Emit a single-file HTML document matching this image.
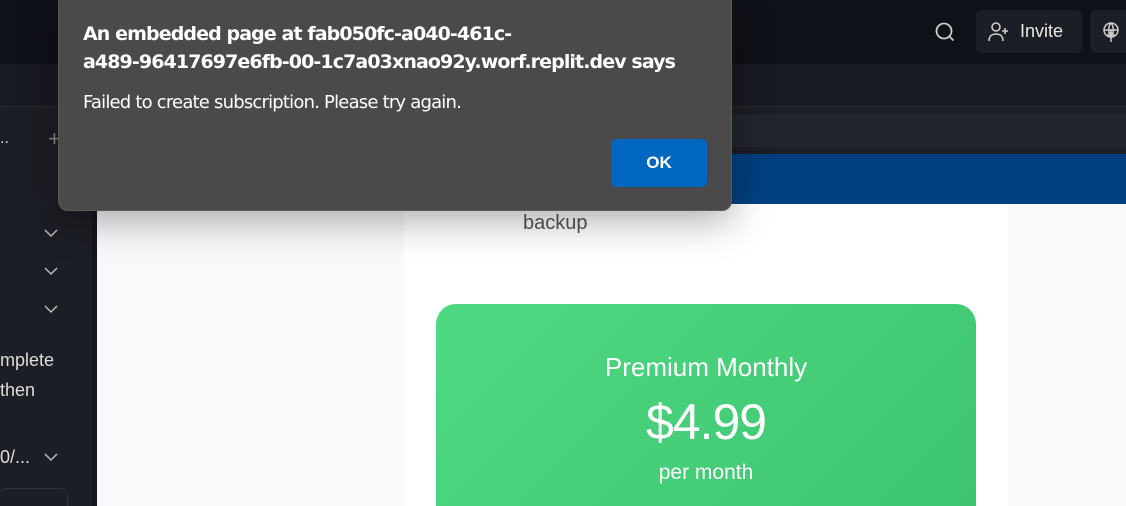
<!DOCTYPE html>
<html><head><style>
*{margin:0;padding:0;box-sizing:border-box}
html,body{width:1126px;height:506px;overflow:hidden}
body{position:relative;background:#f8f9fb;font-family:"Liberation Sans",sans-serif}
.abs{position:absolute}
</style></head><body>
<div class="abs" style="left:0;top:0;width:1126px;height:64px;background:#0f1118"></div>
<div class="abs" style="left:0;top:64px;width:1126px;height:42px;background:#181a21"></div>
<div class="abs" style="left:0;top:106px;width:1126px;height:1px;background:#2a2c34"></div>
<div class="abs" style="left:0;top:107px;width:1126px;height:47px;background:#1c1e25"></div>
<div class="abs" style="left:97px;top:114px;width:1029px;height:33px;background:#23252d"></div>
<div class="abs" style="left:0;top:118px;width:62px;height:42px;background:#23252d"></div>
<div class="abs" style="left:0;top:107px;width:92px;height:399px;background:#1c1e25"></div>
<div class="abs" style="left:92px;top:107px;width:5px;height:399px;background:#15171d"></div>
<div class="abs" style="left:97px;top:154px;width:1029px;height:50px;background:#004080"></div>
<div class="abs" style="left:404px;top:204px;width:604px;height:302px;background:#fff;overflow:hidden">
<div class="abs" style="left:119px;top:8px;font-size:20px;color:#555;font-weight:300">backup</div>
<div class="abs" style="left:32px;top:100px;width:540px;height:240px;border-radius:20px;background:linear-gradient(135deg,#4fd982,#3cc46e);color:#fff;text-align:center">
<div style="margin-top:48px;font-size:26px;font-weight:300">Premium Monthly</div>
<div style="margin-top:10px;font-size:50px;font-weight:300;letter-spacing:-1px">$4.99</div>
<div style="margin-top:10px;font-size:21px">per month</div>
</div>
</div>
<!-- sidebar text -->
<div class="abs" style="left:0;top:130px;color:#ddd;font-size:16px">..</div>
<div class="abs" style="left:48px;top:126px;color:#888;font-size:22px">+</div>
<div class="abs" style="left:0;top:345px;color:#ddd;font-size:18px;line-height:30px">mplete<br>then</div>
<div class="abs" style="left:0;top:447px;color:#ddd;font-size:18px">0/...</div>
<svg class="abs" style="left:42px;top:225px" width="18" height="240" fill="none" stroke="#bbb" stroke-width="1.5"><path d="M3 5l6 6 6-6M3 43l6 6 6-6M3 81l6 6 6-6M3 229l6 6 6-6"/></svg>
<div class="abs" style="left:-2px;top:488px;width:70px;height:18px;border:1px solid #30333a;border-bottom:none;border-radius:8px 8px 0 0;background:#1c1e25"></div>
<!-- top right -->
<svg class="abs" style="left:934px;top:21px" width="22" height="22" fill="none" stroke="#ccc" stroke-width="1.8"><circle cx="10" cy="10" r="7.5"/><path d="M15.5 15.5l4 4"/></svg>
<div class="abs" style="left:976px;top:10px;width:106px;height:43px;background:#1c1e26;border-radius:6px"></div>
<svg class="abs" style="left:987px;top:21px" width="24" height="22" fill="none" stroke="#ccc" stroke-width="1.6"><circle cx="9" cy="6" r="4"/><path d="M2 20c0-5 3-7 7-7s7 2 7 7M18 7v6M15 10h6"/></svg>
<div class="abs" style="left:1020px;top:21px;color:#e8e8e8;font-size:18px">Invite</div>
<div class="abs" style="left:1090px;top:10px;width:36px;height:43px;background:#1c1e26;border-radius:6px 0 0 6px"></div>
<svg class="abs" style="left:1102px;top:21px" width="20" height="22" fill="none" stroke="#ccc" stroke-width="1.5"><circle cx="9" cy="9" r="7"/><path d="M2 9h14M9 2c-3 3-3 11 0 14M9 2c3 3 3 11 0 14M9 8v13M5 15l4-4 4 4"/></svg>
<!-- dialog -->
<div class="abs" style="left:58px;top:0;width:674px;height:211px;background:#4a4a4a;border-radius:0 0 10px 10px;border:1px solid #5a5a5a;border-top:none;box-shadow:0 8px 40px rgba(0,0,0,.35)"></div>
<div class="abs" style="left:83px;top:20px;color:#fff;font-weight:bold;font-size:19px;line-height:28px;font-family:'DejaVu Sans','Liberation Sans',sans-serif;letter-spacing:-0.9px">An embedded page at fab050fc-a040-461c-<br>a489-96417697e6fb-00-1c7a03xnao92y.worf.replit.dev says</div>
<div class="abs" style="left:83px;top:92px;color:#fff;font-size:18px;font-family:'DejaVu Sans','Liberation Sans',sans-serif;letter-spacing:-0.8px">Failed to create subscription. Please try again.</div>
<div class="abs" style="left:611px;top:139px;width:96px;height:48px;background:#0067c0;border-radius:5px;color:#fff;font-weight:bold;font-size:17px;text-align:center;line-height:48px">OK</div>
</body></html>
